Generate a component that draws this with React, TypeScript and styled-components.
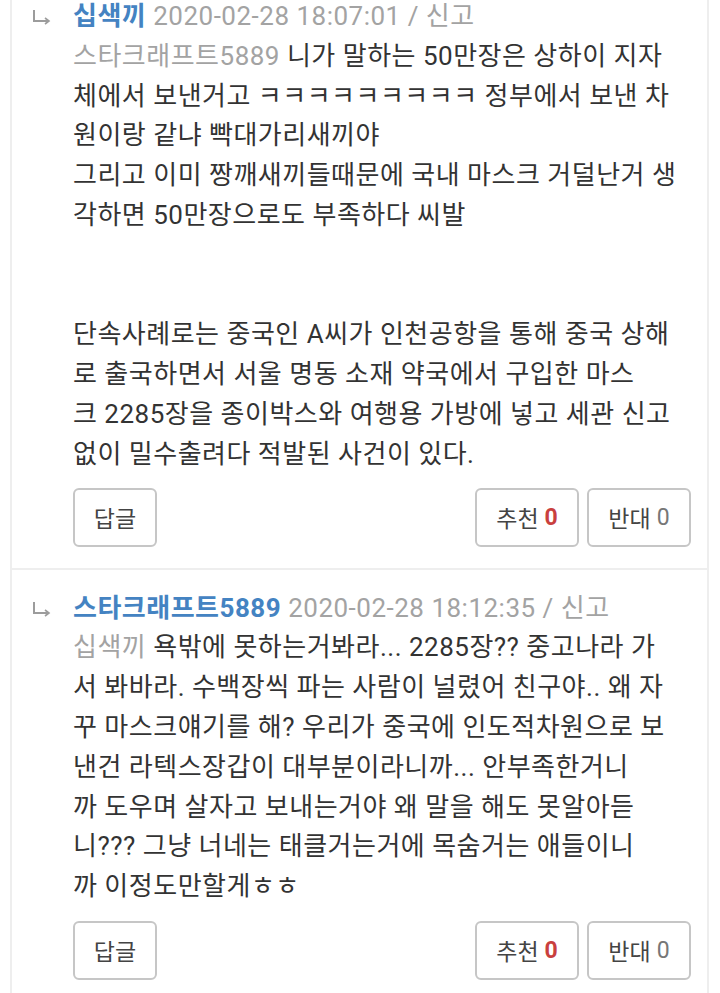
import React from "react";
import styled, { createGlobalStyle } from "styled-components";

const Global = createGlobalStyle`
  html, body { margin: 0; padding: 0; background: #fff; }
  body { font-family: Roboto, "Noto Sans CJK KR", sans-serif; }
`;

const Board = styled.div`
  margin-left: 10px;
  width: 695px;
  border-left: 2px solid #eeeeee;
  border-right: 2px solid #eeeeee;
  margin-top: -3px;
`;

const Comment = styled.section<{ $first?: boolean }>`
  display: grid;
  grid-template-columns: 41px 1fr;
  padding: ${(p) => (p.$first ? "0" : "19px")} 16px 21px 20px;
  border-bottom: 2px solid #eeeeee;
`;

const Arrow = styled.div`
  height: 40px;
  display: flex;
  align-items: center;
`;

const Body = styled.div`
  font-size: 26px;
  letter-spacing: 0.5px;
  line-height: 39.8px;
  color: #333;
`;

const Line = styled.div`
  white-space: nowrap;
  min-height: 39.8px;
`;

const Name = styled.span`
  color: #4483c2;
  font-weight: 700;
`;

const Meta = styled.span`
  color: #a3a3a3;
`;

const Actions = styled.div<{ $gap: number }>`
  grid-column: 2;
  display: flex;
  justify-content: space-between;
  margin-top: ${(p) => p.$gap}px;
`;

const Group = styled.div`
  display: flex;
  gap: 8px;
`;

const Button = styled.button<{ $w: number }>`
  width: ${(p) => p.$w}px;
  height: 59px;
  border: 2px solid #c6c6c6;
  border-radius: 6px;
  background: #fff;
  font-family: Roboto, "Noto Sans CJK KR", sans-serif;
  font-size: 23px;
  color: #444;
  display: flex;
  align-items: center;
  justify-content: center;
  gap: 6px;
  padding: 0;
`;

const Up = styled.b`
  color: #c9403e;
  font-weight: 700;
`;

const Down = styled.span`
  color: #777;
`;

const ReplyArrow = () => (
  <svg width="20" height="16" viewBox="0 0 20 16" fill="none">
    <path d="M2 1 V12 H16" stroke="#9c9c9c" strokeWidth="2" />
    <path d="M13 9 L17 12 L13 15" stroke="#9c9c9c" strokeWidth="1.6" fill="none" />
  </svg>
);

type Props = {
  first?: boolean;
  name: string;
  date: string;
  target: string;
  lines: string[];
  gap: number;
};

const CommentItem = ({ first, name, date, target, lines, gap }: Props) => (
  <Comment $first={first}>
    <Arrow>
      <ReplyArrow />
    </Arrow>
    <Body>
      <Line>
        <Name>{name}</Name> <Meta>{date} / 신고</Meta>
      </Line>
      {lines.map((l, i) => (
        <Line key={i}>
          {i === 0 ? (
            <>
              <Meta>{target}</Meta> {l}
            </>
          ) : (
            l
          )}
        </Line>
      ))}
    </Body>
    <Actions $gap={gap}>
      <Button $w={84}>답글</Button>
      <Group>
        <Button $w={104}>
          추천 <Up>0</Up>
        </Button>
        <Button $w={104}>
          반대 <Down>0</Down>
        </Button>
      </Group>
    </Actions>
  </Comment>
);

export default function App() {
  return (
    <>
      <Global />
      <Board>
        <CommentItem
          first
          name="십색끼"
          date="2020-02-28 18:07:01"
          target="스타크래프트5889"
          gap={13}
          lines={[
            "니가 말하는 50만장은 상하이 지자",
            "체에서 보낸거고 ㅋㅋㅋㅋㅋㅋㅋㅋㅋ 정부에서 보낸 차",
            "원이랑 같냐 빡대가리새끼야",
            "그리고 이미 짱깨새끼들때문에 국내 마스크 거덜난거 생",
            "각하면 50만장으로도 부족하다 씨발",
            "",
            "",
            "단속사례로는 중국인 A씨가 인천공항을 통해 중국 상해",
            "로 출국하면서 서울 명동 소재 약국에서 구입한 마스",
            "크 2285장을 종이박스와 여행용 가방에 넣고 세관 신고",
            "없이 밀수출려다 적발된 사건이 있다.",
          ]}
        />
        <CommentItem
          name="스타크래프트5889"
          date="2020-02-28 18:12:35"
          target="십색끼"
          gap={14}
          lines={[
            "욕밖에 못하는거봐라... 2285장?? 중고나라 가",
            "서 봐바라. 수백장씩 파는 사람이 널렸어 친구야.. 왜 자",
            "꾸 마스크얘기를 해? 우리가 중국에 인도적차원으로 보",
            "낸건 라텍스장갑이 대부분이라니까...  안부족한거니",
            "까 도우며 살자고 보내는거야 왜 말을 해도 못알아듣",
            "니??? 그냥 너네는 태클거는거에 목숨거는 애들이니",
            "까 이정도만할게ㅎㅎ",
          ]}
        />
      </Board>
    </>
  );
}
